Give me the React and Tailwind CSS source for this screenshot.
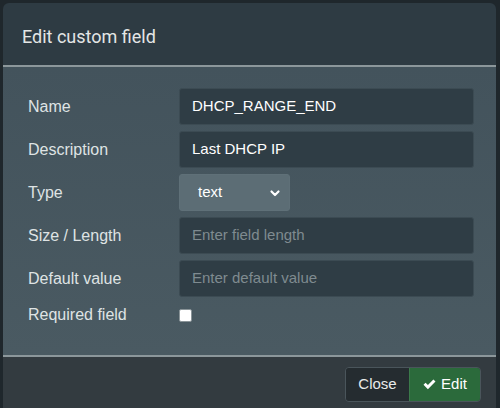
const rows = [
  { label: 'Name', value: 'DHCP_RANGE_END' },
  { label: 'Description', value: 'Last DHCP IP' },
];

export default function App() {
  return (
    <div className="w-[500px] h-[408px] bg-[#1f272c] pt-[3px] pl-[3px] pr-[4px] overflow-hidden font-[family-name:Liberation_Sans,Arial,sans-serif]">
      <div className="w-[493px] h-[420px] rounded-[6px] overflow-hidden flex flex-col bg-[#2e3b43]">
        {/* header */}
        <div className="h-[64px] flex items-center pt-[4px] px-[19px] border-b-2 border-[#8c979b]">
          <h4 className="text-[18px] text-[#e4e6e6] font-[family-name:Roboto,sans-serif]">Edit custom field</h4>
        </div>

        {/* body */}
        <div className="h-[288px] bg-[#45555e] bg-gradient-to-b from-[#43535c] to-[#4a5a62] pt-[21px] pl-[25px] pr-[20px] flex flex-col gap-[6px]">
          {rows.map((r) => (
            <div key={r.label} className="flex items-center">
              <label className="w-[151px] text-[16px] text-[#dfe3e4]">{r.label}</label>
              <div className="w-[295px] h-[37px] rounded-[3px] bg-[#2f3d45] border border-[#3c4b53] flex items-center px-[12px] text-[15px] text-white">
                {r.value}
              </div>
            </div>
          ))}
          <div className="flex items-center">
            <label className="w-[151px] text-[16px] text-[#dfe3e4]">Type</label>
            <div className="w-[111px] h-[37px] rounded-[3px] bg-[#5c6d75] border border-[#5f7078] flex items-center justify-between pl-[18px] pr-[8px] text-[15px] text-white">
              <span>text</span>
              <svg width="12" height="12" viewBox="0 0 12 12" fill="none" stroke="white" strokeWidth="2.2" strokeLinecap="round" strokeLinejoin="round">
                <path d="M2.5 4.5 L6 8 L9.5 4.5" />
              </svg>
            </div>
          </div>
          <div className="flex items-center">
            <label className="w-[151px] text-[16px] text-[#dfe3e4]">Size / Length</label>
            <div className="w-[295px] h-[37px] rounded-[3px] bg-[#2f3d45] border border-[#3c4b53] flex items-center px-[12px] text-[15px] text-[#7f8b90]">
              Enter field length
            </div>
          </div>
          <div className="flex items-center">
            <label className="w-[151px] text-[16px] text-[#dfe3e4]">Default value</label>
            <div className="w-[295px] h-[37px] rounded-[3px] bg-[#2f3d45] border border-[#3c4b53] flex items-center px-[12px] text-[15px] text-[#7f8b90]">
              Enter default value
            </div>
          </div>
          <div className="flex items-center">
            <label className="w-[151px] text-[16px] text-[#dfe3e4]">Required field</label>
            <div className="w-[13px] h-[13px] rounded-[2px] bg-white border border-[#8a9498]" />
          </div>
        </div>

        {/* footer */}
        <div className="flex-1 bg-[#333b40] border-t-2 border-[#8c979b] flex justify-end items-start pt-[10px] pr-[15px]">
          <div className="flex h-[35px] rounded-[4px] border border-[#4a555b] overflow-hidden text-[15px]">
            <button className="w-[63px] bg-[#252c30] text-[#e8eaea]">Close</button>
            <button className="w-[71px] bg-[#2b6a3b] text-white flex items-center justify-center gap-[5px] border-l border-[#3b7a4a]">
              <svg width="13" height="11" viewBox="0 0 13 11" fill="white">
                <path d="M0.5 5.8 L2.6 3.7 L4.9 6 L10.4 0.5 L12.5 2.6 L4.9 10.2 Z" />
              </svg>
              Edit
            </button>
          </div>
        </div>
      </div>
    </div>
  );
}
